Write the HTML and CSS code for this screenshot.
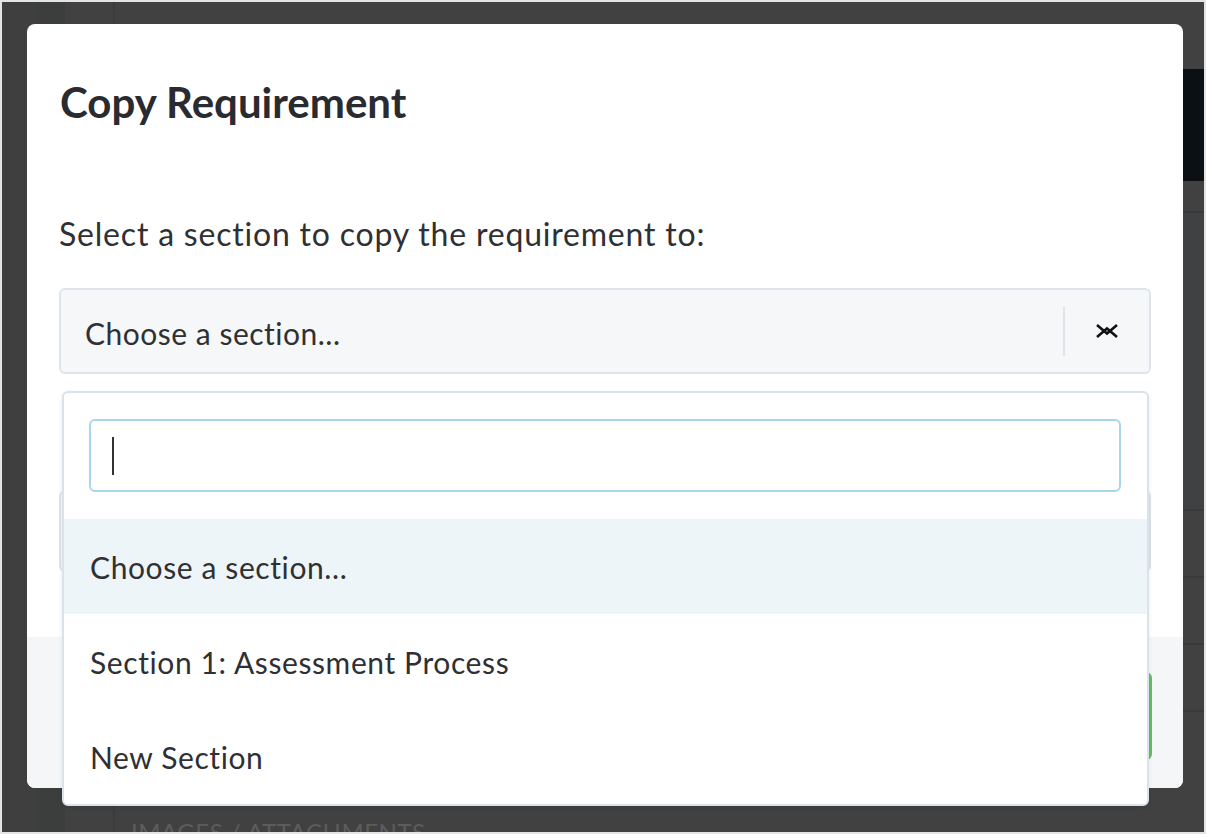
FILE: index.html
```html
<!DOCTYPE html>
<html lang="en">
<head>
    <meta charset="UTF-8">
    <title>Copy Requirement</title>
    <link rel="stylesheet" href="styles.css">
</head>
<body>
    <div class="screen">
        <!-- page behind the modal, already dimmed -->
        <div class="backdrop">
            <div class="rail"></div>
            <div class="rail rail-mid"></div>
            <div class="rail rail-wide"></div>
            <div class="page">
                <div class="page-top"></div>
                <div class="page-header"></div>
                <div class="page-row page-row-tall"></div>
                <div class="page-row page-row-big"></div>
                <div class="page-row"></div>
                <div class="page-row"></div>
                <div class="page-row"></div>
                <div class="page-label">IMAGES / ATTACHMENTS</div>
            </div>
        </div>

        <div class="overlay">
            <div class="modal">
                <div class="modal-header">
                    <h2>Copy Requirement</h2>
                </div>
                <div class="modal-body">
                    <p class="prompt">Select a section to copy the requirement to:</p>
                    <div class="select">
                        <span class="select-value">Choose a section...</span>
                        <span class="select-arrow">
                            <svg width="24" height="18" viewBox="0 0 24 18">
                                <polyline points="2,3 12,11.5 22,3" fill="none" stroke="#111" stroke-width="2.6"/>
                                <polyline points="2,15 12,6.5 22,15" fill="none" stroke="#111" stroke-width="2.6"/>
                            </svg>
                        </span>
                    </div>
                    <div class="select select-hidden"></div>
                </div>
                <div class="modal-footer">
                    <button class="btn-copy" type="button">Copy</button>
                </div>

                <!-- open dropdown of the section select -->
                <div class="dropdown">
                    <div class="search"><span class="caret"></span></div>
                    <ul class="options">
                        <li class="option active">Choose a section...</li>
                        <li class="option">Section 1: Assessment Process</li>
                        <li class="option">New Section</li>
                    </ul>
                </div>
            </div>
        </div>
    </div>
</body>
</html>
```

FILE: styles.css
```css
* {
    margin: 0;
    padding: 0;
    box-sizing: border-box;
}

body {
    font-family: Lato, "Open Sans", sans-serif;
    background: #e4e4e4;
}

.screen {
    position: relative;
    width: 1206px;
    height: 834px;
    border: 2px solid #e4e4e4;
    background: #414141;
    overflow: hidden;
}

/* dimmed page */
.backdrop {
    display: flex;
    height: 100%;
}

.rail {
    width: 34px;
    background: #3f3f3f;
}

.rail-mid {
    width: 29px;
    background: #3c3d3d;
}

.rail-wide {
    width: 50px;
    background: #414141;
    border-right: 2px solid #3b3b3b;
}

.page {
    flex: 1;
    display: flex;
    flex-direction: column;
}

.page > div {
    flex-shrink: 0;
}

.page-top {
    height: 67px;
}

.page-header {
    height: 112px;
    background: #0a1013;
}

.page-row {
    height: 67px;
    border-bottom: 2px solid #393a3a;
}

.page-row-tall {
    height: 32px;
}

.page-row-big {
    height: 298px;
    background: #404142;
}

.page-label {
    padding: 105px 0 0 16px;
    font-size: 24px;
    line-height: 29px;
    color: #5c5c5c;
    letter-spacing: 0.5px;
}

/* modal */
.overlay {
    position: absolute;
    inset: 0;
    padding: 22px 0 0 25px;
}

.modal {
    position: relative;
    width: 1156px;
    height: 764px;
    background: #fff;
    border-radius: 8px;
    display: flex;
    flex-direction: column;
}

.modal-header {
    padding: 53px 32px 0 33px;
}

.modal-header h2 {
    font-size: 42px;
    line-height: 50px;
    font-weight: 700;
    color: #2a2b30;
}

.modal-body {
    padding: 0 32px;
}

.prompt {
    margin-top: 88px;
    font-size: 32px;
    line-height: 38px;
    letter-spacing: 0.8px;
    color: #2f3034;
}

.select {
    margin-top: 35px;
    height: 86px;
    display: flex;
    align-items: center;
    background: #f6f7f9;
    border: 2px solid #dfe4ea;
    border-radius: 6px;
}

.select-value {
    flex: 1;
    padding: 4px 0 0 24px;
    font-size: 30px;
    letter-spacing: 0.5px;
    color: #2f3034;
}

.select-arrow {
    width: 86px;
    height: 49px;
    display: flex;
    align-items: center;
    justify-content: center;
    border-left: 2px solid #dfe4ea;
}

.select-hidden {
    margin-top: 116px;
    height: 82px;
}

.modal-footer {
    margin-top: auto;
    height: 151px;
    background: #f5f6f8;
    border-radius: 0 0 8px 8px;
    display: flex;
    justify-content: flex-end;
    padding: 35px 31px 0 0;
}

.btn-copy {
    width: 200px;
    height: 88px;
    border: none;
    border-radius: 6px;
    background: #63bd63;
    color: #fff;
    font-family: inherit;
    font-size: 24px;
}

/* dropdown */
.dropdown {
    position: absolute;
    top: 367px;
    left: 35px;
    width: 1087px;
    height: 415px;
    background: #fff;
    border: 2px solid #dae2ea;
    border-radius: 6px;
    box-shadow: 0 2px 4px rgba(0, 0, 0, 0.08);
    overflow: hidden;
}

.search {
    margin: 26px 26px 27px 25px;
    height: 73px;
    border: 2px solid #a9d6e8;
    border-radius: 6px;
    display: flex;
    align-items: center;
    padding-left: 21px;
}

.caret {
    width: 2px;
    height: 38px;
    background: #333;
}

.options {
    list-style: none;
}

.option {
    height: 95px;
    display: flex;
    align-items: center;
    padding-left: 26px;
    font-size: 30px;
    letter-spacing: 0.6px;
    color: #2f3034;
}

.option.active {
    background: #edf5f8;
}
```
